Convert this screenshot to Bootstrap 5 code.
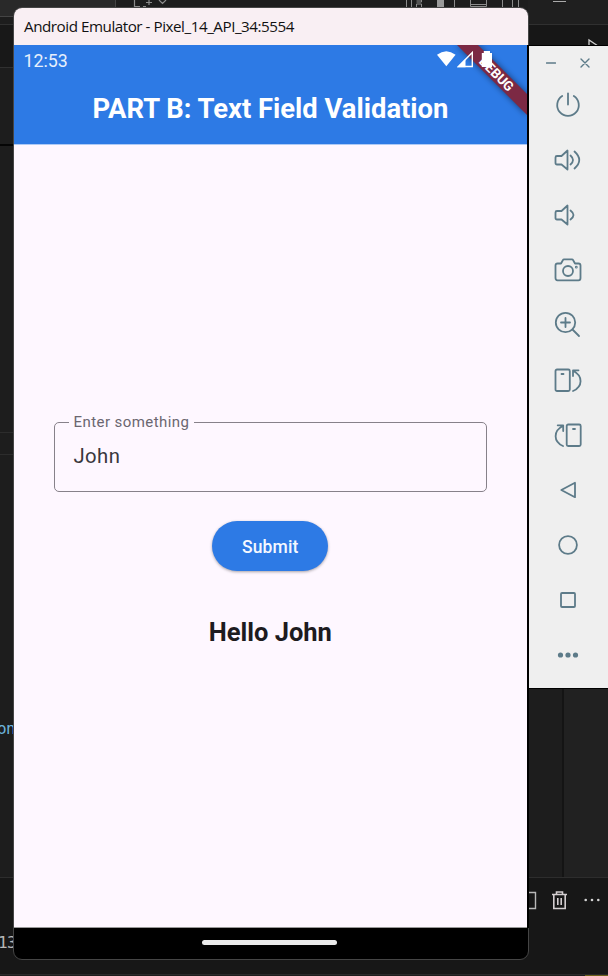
<!DOCTYPE html>
<html lang="en">
<head>
<meta charset="utf-8">
<meta name="viewport" content="width=device-width, initial-scale=1">
<title>Android Emulator</title>
<link href="https://cdn.jsdelivr.net/npm/bootstrap@5.3.0/dist/css/bootstrap.min.css" rel="stylesheet">
<style>
body{width:608px;height:976px;background:#1e1e1e;font-family:Roboto,sans-serif;line-height:1}
.desktop{width:608px;height:976px}
.editor-code{left:0;font:16px/1 "DejaVu Sans Mono",monospace;white-space:nowrap;letter-spacing:-.6px}
.code-a{top:721px;left:-3px;color:#6cb3dc}
.code-b{top:935px;left:-2px;color:#b8b8b8}
.phone-window{left:13px;top:7px;width:516px;height:953px;border:1px solid #454545;border-radius:9px;background:#000}
.titlebar{height:37px;padding-left:10px;background:#f9eff3;color:#111;font:15.2px/1 "Open Sans",sans-serif}
.titlebar span{white-space:nowrap;letter-spacing:-.46px}
.screen{width:513px;height:883px;background:#fef7ff;border-bottom:1px solid #999}
.app-header{height:100px;background:#2d7ae5;border-bottom:1px solid #aecaf6}
.status{height:31px;padding-left:9.5px;font-size:17.8px}
.status span{color:#e6effc}
.app-title{font-size:27.4px;white-space:nowrap;height:66px}
.ribbon{left:423px;top:0;width:90px;height:80px}
.app-body{padding:277px 40px 0 39.5px}
.outlined{height:70px;border:1px solid #87818a;border-radius:5px;padding:0 0 2px 19px;font-size:20.3px;letter-spacing:.4px;color:#3a383d}
.outlined label{left:14px;margin-top:-1px;padding:0 5px;background:#fef7ff;font-size:15px;letter-spacing:.43px;color:#6b6670;white-space:nowrap}
.submit{width:116px;height:50px;margin-top:29px;background:#2d7ae5;color:#f4f8ff;font-size:17.5px;font-weight:500;letter-spacing:.1px;box-shadow:0 1px 3px rgba(0,0,0,.35)}
.submit.btn{padding-top:2px!important}
.greeting{margin-top:49px;font-size:25.5px;color:#1d1b20;white-space:nowrap}
.nav-area{height:31px}
.home-pill{width:135px;height:5px;background:#ebebeb;margin-right:3px;margin-bottom:3px}
.tools{left:527px;top:45px;width:81px;height:644px;background:#efefef;border:solid #000;border-width:1px 0 1px 2px;color:#5d7b89}
.tools svg{fill:none;stroke:currentColor;stroke-width:1.8;stroke-linecap:round;stroke-linejoin:round}
.window-buttons{height:31px;padding:3px 18px 0 17px}
.tool{height:55px;padding-right:1px}
.phone-edge{left:527px;top:45px;width:2px;height:883px;background:#000}
</style>
</head>
<body class="overflow-hidden">
<main class="desktop position-relative overflow-hidden">
  <svg class="d-block" width="608" height="976" viewBox="0 0 608 976" shape-rendering="crispEdges">
    <rect width="608" height="976" fill="#1d1d1d"/>
    <rect width="115" height="16" fill="#292929"/><rect x="115" width="1" height="8" fill="#444"/>
    <rect y="16" width="14" height="1" fill="#444"/><rect y="24" width="14" height="1" fill="#303030"/>
    <rect y="25" width="14" height="42" fill="#181818"/><rect y="67" width="14" height="1" fill="#303030"/>
    <rect y="144" width="14" height="2" fill="#050505"/>
    <rect y="432" width="14" height="1" fill="#2c2c2c"/><rect y="454" width="14" height="1" fill="#2c2c2c"/>
    <rect x="528" width="80" height="24" fill="#1f1f1f"/><rect x="528" y="24" width="80" height="1" fill="#303030"/>
    <rect x="528" y="25" width="80" height="21" fill="#171717"/>
    <rect x="553" y="1" width="13" height="1" fill="#aaa"/>
    <rect x="562" y="688" width="2" height="189" fill="#141414"/><rect x="564" y="688" width="44" height="189" fill="#212121"/>
    <rect y="877" width="608" height="1" fill="#2d2d2d"/><rect y="878" width="608" height="96" fill="#171717"/>
    <rect y="974" width="608" height="1" fill="#292929"/><rect x="585" y="975" width="23" height="1" fill="#6d5f19"/>
    <g fill="none" stroke="#8c8c8c" shape-rendering="auto">
      <path d="M134.500 0V6.500H140M143 6.500H146M159 0L162.500 3.500L166 0M149 0V5M146 2.500H152" stroke-width="1.200"/>
      <path d="M406.500 0V8M411.500 0V8M416.500 0H421.500V2H416.500M416.500 8V4H421.500V8M454.500 0V8M470.500 0V6.500H486.500V0M470 4.500H487M502.500 0V8M512.500 0V8M518.500 0V8"/>
      <path d="M589 46V40L598 46" stroke="#d0d0d0" stroke-width="1.300"/>
      <path d="M528 892.500H535.500V908.500H528" stroke="#b8b8b8" stroke-width="1.400"/>
      <path d="M552 894.500H567M556.500 894V892H562.500V894M553.800 895V908.500H565.200V895M557.800 898V905M561.200 898V905" stroke="#d4ced0" stroke-width="1.600"/>
    </g>
    <rect x="437" width="7" height="8" fill="#999"/>
    <g fill="#d4d4d4" shape-rendering="auto"><circle cx="585.700" cy="900" r="1.300"/><circle cx="592" cy="900" r="1.300"/><circle cx="598.300" cy="900" r="1.300"/></g>
  </svg>
  <span class="editor-code code-a position-absolute">on</span>
  <span class="editor-code code-b position-absolute">13</span>

  <section class="phone-window position-absolute overflow-hidden d-flex flex-column">
    <header class="titlebar d-flex align-items-center"><span>Android Emulator - Pixel_14_API_34:5554</span></header>
    <div class="screen position-relative overflow-hidden">
      <div class="app-header">
        <div class="status d-flex align-items-center"><span>12:53</span></div>
        <h1 class="app-title fw-bold text-white m-0 d-flex align-items-center justify-content-center">PART B: Text Field Validation</h1>
      </div>
      <svg class="ribbon position-absolute" viewBox="0 0 90 80">
        <defs><filter id="soft" x="-30%" y="-30%" width="160%" height="160%"><feGaussianBlur stdDeviation="3"/></filter></defs>
        <path d="M20 0H41L90 49V70Z" fill="#000" opacity=".5" filter="url(#soft)"/>
        <path d="M15 -5H36L100 59V80Z" fill="#7c2944"/>
        <text transform="translate(59.500 29) rotate(45)" text-anchor="middle" y="4.600" font-family="Roboto" font-weight="700" font-size="13.300" fill="#fff">DEBUG</text>
        <path d="M0 9.800Q9.300 2.800 18.600 9.800L9.300 21.300Z" fill="#fff"/>
        <path d="M21.500 21.500L35.300 7.500V21.500Z" fill="none" stroke="#fff" stroke-width="1.400"/><path d="M20 22.200L28.500 13.700V22.200Z" fill="#fff"/>
        <path d="M46.800 6H53V8H55V22H44.800V8H46.800Z" fill="#fff"/>
      </svg>
      <div class="app-body d-flex flex-column align-items-center">
        <div class="outlined position-relative w-100 d-flex align-items-center">
          <label class="position-absolute top-0 translate-middle-y">Enter something</label><span>John</span>
        </div>
        <button class="submit btn rounded-pill border-0 p-0">Submit</button>
        <p class="greeting fw-bold mb-0">Hello John</p>
      </div>
    </div>
    <footer class="nav-area d-flex align-items-center justify-content-center"><div class="home-pill rounded-pill"></div></footer>
  </section>
  <div class="phone-edge position-absolute"></div>

  <aside class="tools position-absolute">
    <div class="window-buttons d-flex align-items-center justify-content-between">
      <svg width="10" height="10"><path d="M.5 5H9.500" stroke-width="1.300"/></svg>
      <svg width="10" height="10"><path d="M1 1L9 9M9 1L1 9" stroke-width="1.400"/></svg>
    </div>
    <div class="d-flex flex-column align-items-center">
      <div class="tool d-flex align-items-center"><svg width="28" height="28"><path d="M14 2.300V13.500M8.200 5A10.800 10.800 0 1 0 19.800 5"/></svg></div>
      <div class="tool d-flex align-items-center"><svg width="28" height="28"><path d="M13.500 4.500V23.500L7.500 18.500H3Q1.500 18.500 1.500 17V11.500Q1.500 10 3 10H7.500ZM16.500 9.500Q21.500 14 16.500 18.500M20.500 5.500Q30 14 20.500 22.500"/></svg></div>
      <div class="tool d-flex align-items-center"><svg width="28" height="28"><path d="M13.500 4.500V23.500L7.500 18.500H3Q1.500 18.500 1.500 17V11.500Q1.500 10 3 10H7.500ZM16.500 9.500Q22.500 14 16.500 18.500"/></svg></div>
      <div class="tool d-flex align-items-center"><svg width="28" height="28"><path d="M3.500 7.500H7L9 4Q9.300 3.300 10 3.300H18Q18.700 3.300 19 4L21 7.500H24.500Q26.500 7.500 26.500 9.500V22Q26.500 24.300 24.500 24.300H3.500Q1.500 24.300 1.500 22V9.500Q1.500 7.500 3.500 7.500Z"/><circle cx="14" cy="15" r="5"/><circle cx="22.300" cy="11.200" r=".5"/></svg></div>
      <div class="tool d-flex align-items-center"><svg width="28" height="28"><circle cx="11.500" cy="11.500" r="9.700"/><path d="M18.500 18.500L25 25M7 11.500H16M11.500 7V16"/></svg></div>
      <div class="tool d-flex align-items-center"><svg width="28" height="28"><rect x="1.500" y="3.500" width="14.300" height="21.500" rx="1.500"/><path d="M7.500 8H9.500M19 25C29 20.500 29 10 19.500 5M19 10V4.300H24.500"/></svg></div>
      <div class="tool d-flex align-items-center"><svg width="28" height="28"><rect x="12.700" y="3.500" width="14" height="21.500" rx="1.500"/><path d="M19 8H21M9 25C-.800 20.500 -.800 10 8.700 5M9.200 10V4.300H3.700"/></svg></div>
      <div class="tool d-flex align-items-center"><svg width="28" height="28"><path d="M21 6.800V21.200L7.300 14Z"/></svg></div>
      <div class="tool d-flex align-items-center"><svg width="28" height="28"><circle cx="14" cy="14" r="8.900"/></svg></div>
      <div class="tool d-flex align-items-center"><svg width="28" height="28"><rect x="7" y="7" width="14" height="14" rx="1"/></svg></div>
      <div class="tool d-flex align-items-center"><svg width="28" height="28"><g fill="currentColor" stroke="none"><circle cx="6.500" cy="14" r="2.600"/><circle cx="14" cy="14" r="2.600"/><circle cx="21.500" cy="14" r="2.600"/></g></svg></div>
    </div>
  </aside>
</main>
<script src="https://cdn.jsdelivr.net/npm/bootstrap@5.3.0/dist/js/bootstrap.bundle.min.js"></script>
</body>
</html>
